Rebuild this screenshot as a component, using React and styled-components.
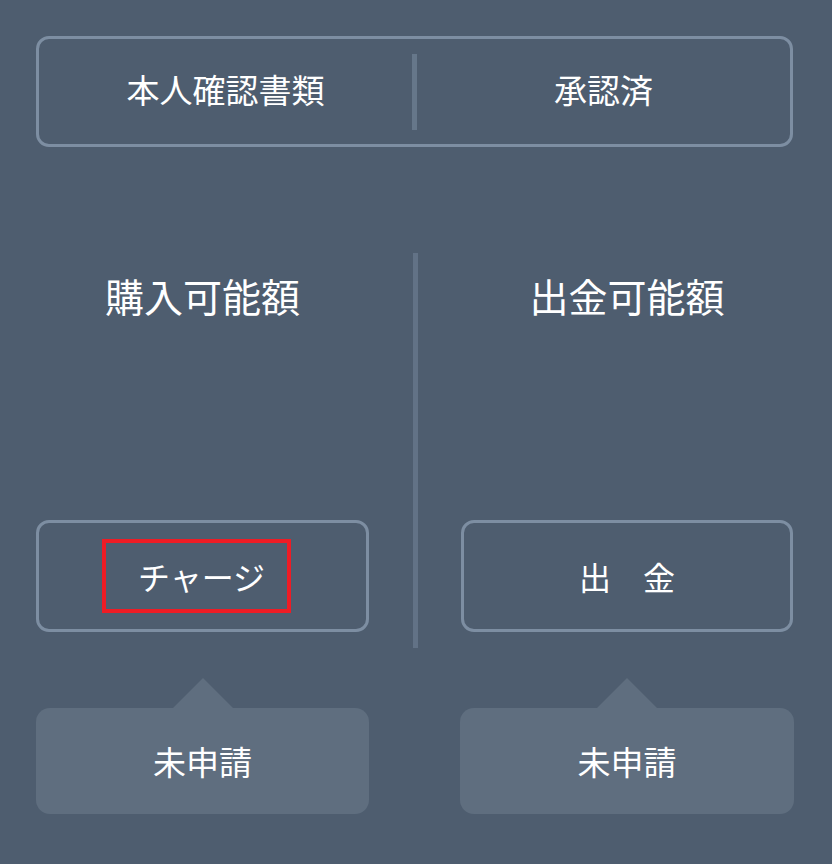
import styled, { createGlobalStyle } from "styled-components";

const GlobalStyle = createGlobalStyle`
  html, body {
    margin: 0;
    padding: 0;
    background: #4e5d6f;
    font-family: "Noto Sans CJK JP", "Noto Sans", sans-serif;
    color: #ffffff;
  }
`;

const Page = styled.div`
  width: 757px;
  min-height: 864px;
  padding: 36px 39px 0 36px;
  box-sizing: content-box;
`;

// 上の本人確認書類ボックス
const StatusBox = styled.div`
  height: 111px;
  box-sizing: border-box;
  border: 3px solid #7d8ea2;
  border-radius: 13px;
  display: grid;
  grid-template-columns: 1fr 5px 1fr;
  align-items: center;
`;

const StatusText = styled.div`
  font-size: 33px;
  text-align: center;
  line-height: 1;
  margin-top: -4px;
`;

const ShortDivider = styled.div`
  height: 76px;
  background: #66778a;
`;

const Balance = styled.div`
  margin-top: 106px;
  display: grid;
  grid-template-columns: 333px 92px 332px;
  height: 395px;
`;

const Column = styled.div`
  display: flex;
  flex-direction: column;
  align-items: stretch;
`;

const Heading = styled.h2`
  margin: 19px 0 0;
  font-size: 39px;
  font-weight: 400;
  line-height: 46px;
  text-align: center;
`;

const LongDivider = styled.div`
  width: 5px;
  margin: 0 auto;
  background: #627286;
`;

const ActionButton = styled.button`
  margin-top: auto;
  margin-bottom: 16px;
  height: 112px;
  box-sizing: border-box;
  border: 3px solid #7d8ea2;
  border-radius: 13px;
  background: transparent;
  color: #ffffff;
  font-family: inherit;
  font-size: 32px;
  display: flex;
  align-items: center;
  justify-content: center;
  cursor: pointer;
`;

const Highlight = styled.span`
  display: inline-flex;
  align-items: center;
  height: 74px;
  box-sizing: border-box;
  padding: 0 22px 0 32px;
  margin-right: 12px;
  border: 4px solid #ee1c25;
`;

const Notes = styled.div`
  display: grid;
  grid-template-columns: 333px 91px 334px;
  margin-top: 60px;
`;

const Bubble = styled.div`
  position: relative;
  height: 106px;
  border-radius: 14px;
  background: #5f6e7f;
  font-size: 33px;
  display: flex;
  align-items: center;
  justify-content: center;

  &::before {
    content: "";
    position: absolute;
    top: -30px;
    left: 50%;
    margin-left: -30px;
    border-left: 30px solid transparent;
    border-right: 30px solid transparent;
    border-bottom: 30px solid #5f6e7f;
  }
`;

const Spacer = styled.div``;

const App = () => {
  return (
    <>
      <GlobalStyle />
      <Page>
        <StatusBox>
          <StatusText>本人確認書類</StatusText>
          <ShortDivider />
          <StatusText>承認済</StatusText>
        </StatusBox>

        <Balance>
          <Column>
            <Heading>購入可能額</Heading>
            <ActionButton>
              <Highlight>チャージ</Highlight>
            </ActionButton>
          </Column>
          <LongDivider />
          <Column>
            <Heading>出金可能額</Heading>
            <ActionButton>出　金</ActionButton>
          </Column>
        </Balance>

        <Notes>
          <Bubble>未申請</Bubble>
          <Spacer />
          <Bubble>未申請</Bubble>
        </Notes>
      </Page>
    </>
  );
};

export default App;
